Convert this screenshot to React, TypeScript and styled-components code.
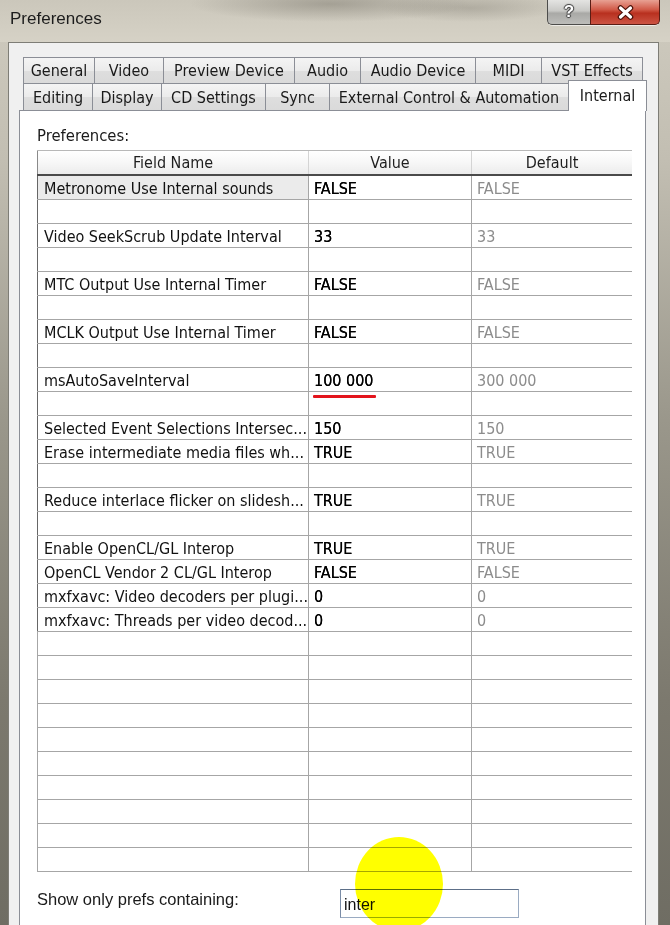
import React from 'react'
import styled, { createGlobalStyle, css } from 'styled-components'

const uiFont = `"DejaVu Sans Condensed", "DejaVu Sans", sans-serif`
const sysFont = `"Liberation Sans", Arial, sans-serif`

const GlobalStyle = createGlobalStyle`
  html, body {
    margin: 0;
    padding: 0;
  }
  body {
    width: 670px;
    height: 925px;
    overflow: hidden;
    background: #8f8c80;
  }
`

const Window = styled.div`
  position: relative;
  width: 670px;
  height: 925px;
  display: flex;
  flex-direction: column;
  overflow: hidden;
  isolation: isolate;
  background: linear-gradient(
    to bottom,
    #cfcbbf 0,
    #c2beb2 160px,
    #9a978b 420px,
    #7c796e 700px,
    #6f6d63 100%
  );
`

const TitleBar = styled.div`
  height: 42px;
  flex: none;
  display: flex;
  align-items: flex-start;
  background:
    radial-gradient(ellipse 140px 18px at 330px 4px, rgba(90, 86, 76, 0.35), transparent),
    radial-gradient(ellipse 90px 14px at 470px 8px, rgba(90, 86, 76, 0.25), transparent),
    linear-gradient(to bottom, #cbc7bb, #d6d2c6);
`

const Title = styled.div`
  margin: 9px 0 0 10px;
  font: 17px/20px ${sysFont};
  color: #1c1c1c;
`

const CaptionButtons = styled.div`
  margin: 0 10px 0 auto;
  display: flex;
  box-shadow: 0 1px 0 rgba(255, 255, 255, 0.6);
  border-radius: 0 0 6px 6px;
`

const CaptionButton = styled.div<{ $kind: 'help' | 'close' }>`
  box-sizing: border-box;
  height: 25px;
  display: flex;
  align-items: center;
  justify-content: center;
  border: 1px solid #4d4d4b;
  border-top: none;
  ${({ $kind }) =>
    $kind === 'help'
      ? css`
          width: 43px;
          border-radius: 0 0 0 5px;
          border-right: none;
          background: linear-gradient(to bottom, #e4e4e2 0, #c9c9c6 45%, #a9a9a6 55%, #bdbdba 100%);
        `
      : css`
          width: 70px;
          border-radius: 0 0 5px 0;
          border-color: #5a1d14;
          background: linear-gradient(to bottom, #e8a193 0, #d15a48 40%, #b8301f 55%, #cc5443 100%);
        `}
`

const HelpGlyph = styled.span`
  font: bold 17px/1 ${sysFont};
  color: #fff;
  text-shadow:
    0 0 1px #333,
    1px 0 1px #444,
    -1px 0 1px #444,
    0 1px 1px #444,
    0 -1px 1px #444;
  margin-bottom: 2px;
`

const Body = styled.div`
  flex: 1;
  display: flex;
  padding: 0 11px 0 8px;
  min-height: 0;
`

const Client = styled.div`
  flex: 1;
  display: flex;
  flex-direction: column;
  background: #f0f0f0;
  border: 1px solid #7e7d76;
  border-bottom: none;
  padding: 14px 12px 0 10px;
  min-width: 0;
`

const TabStrip = styled.div`
  display: flex;
  flex-direction: column;
  padding-left: 4px;
`

const TabRow = styled.div`
  display: flex;
  align-items: flex-start;
`

const Tab = styled.div<{ $w: number; $h: number; $active?: boolean }>`
  box-sizing: border-box;
  width: ${({ $w }) => $w}px;
  height: ${({ $h }) => $h}px;
  margin-right: -1px;
  padding-top: 1px;
  display: flex;
  align-items: center;
  justify-content: center;
  border: 1px solid #8b8e96;
  border-bottom: none;
  font: 16px/18px ${uiFont};
  font-stretch: condensed;
  color: #1a1a1a;
  white-space: nowrap;
  background: linear-gradient(to bottom, #f4f4f4 0, #ebebeb 50%, #dedede 51%, #dadada 100%);
  ${({ $active }) =>
    $active &&
    css`
      position: relative;
      z-index: 1;
      margin-top: -3px;
      margin-bottom: -1px;
      padding-top: 0;
      background: #fff;
    `}
`

const Panel = styled.div`
  flex: 1;
  background: #fff;
  border: 1px solid #8b8e96;
  border-bottom: none;
  padding: 15px 0 0 17px;
`

const Caption = styled.div`
  font: 16.5px/20px ${uiFont};
  font-stretch: condensed;
  color: #1a1a1a;
  margin-bottom: 4px;
`

const Table = styled.div`
  width: 595px;
  display: flex;
  flex-direction: column;
`

const cols = css`
  display: grid;
  grid-template-columns: 271px 163px 161px;
`

const HeaderRow = styled.div`
  ${cols};
  box-sizing: border-box;
  height: 26px;
  border-top: 1px solid #b8b8b8;
  border-bottom: 2px solid #4a4a4a;
  background: linear-gradient(to bottom, #ffffff 0, #f7f7f7 50%, #ececec 100%);
`

const HeaderCell = styled.div<{ $first?: boolean }>`
  border-left: 1px solid ${({ $first }) => ($first ? '#8a8a8a' : '#d4d4d4')};
  text-align: center;
  font: 16px/23px ${uiFont};
  font-stretch: condensed;
  color: #1e1e1e;
`

const Row = styled.div`
  ${cols};
  box-sizing: border-box;
  height: 24px;
  border-bottom: 1px solid #a6a6a6;
`

const Cell = styled.div<{ $tone?: 'name' | 'value' | 'default'; $edge?: 'dark' | 'light'; $focus?: boolean }>`
  box-sizing: border-box;
  padding: 2px 0 0 5px;
  white-space: nowrap;
  font: 16px/21px ${uiFont};
  font-stretch: condensed;
  border-left: 1px solid #a6a6a6;
  color: ${({ $tone }) => ($tone === 'default' ? '#8c8c8c' : '#111')};
  ${({ $tone }) =>
    $tone === 'name' &&
    css`
      padding-left: 6px;
      overflow: hidden;
    `}
  ${({ $tone }) =>
    $tone === 'value' &&
    css`
      color: #000;
      text-shadow: 0 0 0.4px #000;
    `}
  ${({ $edge }) =>
    $edge === 'dark' &&
    css`
      border-left-color: #666;
    `}
  ${({ $focus }) =>
    $focus &&
    css`
      background: #ebebeb;
    `}
`

const Marked = styled.span`
  position: relative;

  &::after {
    content: '';
    position: absolute;
    left: -1px;
    bottom: -8px;
    width: 63px;
    height: 3px;
    border-radius: 1px;
    background: #e3141c;
  }
`

const FilterRow = styled.div`
  display: flex;
  align-items: flex-start;
  margin-top: 17px;
`

const FilterLabel = styled.label`
  width: 303px;
  font: 16.5px/20px ${sysFont};
  color: #1a1a1a;
`

const FilterInput = styled.input`
  box-sizing: border-box;
  width: 179px;
  height: 29px;
  margin: 0;
  padding: 3px 0 0 3px;
  border: 1px solid #9aabc2;
  border-top-color: #5d6f88;
  border-left-color: #7a8ca6;
  background: transparent;
  font: 16px ${sysFont};
  color: #111;
  outline: none;
`

const Spot = styled.div`
  position: absolute;
  left: 355px;
  top: 837px;
  width: 88px;
  height: 94px;
  border-radius: 50%;
  background: #ffff00;
  mix-blend-mode: multiply;
  pointer-events: none;
  z-index: 5;
`

type Pref = { name: string; value: string; def: string; mark?: boolean }

const prefs: (Pref | null)[] = [
  { name: 'Metronome Use Internal sounds', value: 'FALSE', def: 'FALSE' },
  null,
  { name: 'Video SeekScrub Update Interval', value: '33', def: '33' },
  null,
  { name: 'MTC Output Use Internal Timer', value: 'FALSE', def: 'FALSE' },
  null,
  { name: 'MCLK Output Use Internal Timer', value: 'FALSE', def: 'FALSE' },
  null,
  { name: 'msAutoSaveInterval', value: '100 000', def: '300 000', mark: true },
  null,
  { name: 'Selected Event Selections Intersec...', value: '150', def: '150' },
  { name: 'Erase intermediate media files wh...', value: 'TRUE', def: 'TRUE' },
  null,
  { name: 'Reduce interlace flicker on slidesh...', value: 'TRUE', def: 'TRUE' },
  null,
  { name: 'Enable OpenCL/GL Interop', value: 'TRUE', def: 'TRUE' },
  { name: 'OpenCL Vendor 2 CL/GL Interop', value: 'FALSE', def: 'FALSE' },
  { name: 'mxfxavc: Video decoders per plugi...', value: '0', def: '0' },
  { name: 'mxfxavc: Threads per video decod...', value: '0', def: '0' },
]

const EMPTY_ROWS = 10

const topTabs: [string, number][] = [
  ['General', 72],
  ['Video', 70],
  ['Preview Device', 132],
  ['Audio', 67],
  ['Audio Device', 116],
  ['MIDI', 67],
  ['VST Effects', 102],
]

const bottomTabs: [string, number][] = [
  ['Editing', 70],
  ['Display', 70],
  ['CD Settings', 105],
  ['Sync', 65],
  ['External Control & Automation', 240],
]

const CloseIcon = () => (
  <svg width="17" height="15" viewBox="0 0 17 15">
    <path d="M3.5 3 L13.5 12 M13.5 3 L3.5 12" stroke="#4a1008" strokeWidth="5.5" strokeLinecap="round" />
    <path d="M3.5 3 L13.5 12 M13.5 3 L3.5 12" stroke="#fff" strokeWidth="3.2" strokeLinecap="round" />
  </svg>
)

export default function App() {
  return (
    <Window>
      <GlobalStyle />
      <TitleBar>
        <Title>Preferences</Title>
        <CaptionButtons>
          <CaptionButton $kind="help">
            <HelpGlyph>?</HelpGlyph>
          </CaptionButton>
          <CaptionButton $kind="close">
            <CloseIcon />
          </CaptionButton>
        </CaptionButtons>
      </TitleBar>
      <Body>
        <Client>
          <TabStrip>
            <TabRow>
              {topTabs.map(([label, w]) => (
                <Tab key={label} $w={w} $h={26}>
                  {label}
                </Tab>
              ))}
            </TabRow>
            <TabRow>
              {bottomTabs.map(([label, w]) => (
                <Tab key={label} $w={w} $h={27}>
                  {label}
                </Tab>
              ))}
              <Tab $w={79} $h={31} $active>
                Internal
              </Tab>
            </TabRow>
          </TabStrip>
          <Panel>
            <Caption>Preferences:</Caption>
            <Table>
              <HeaderRow>
                <HeaderCell $first>Field Name</HeaderCell>
                <HeaderCell>Value</HeaderCell>
                <HeaderCell>Default</HeaderCell>
              </HeaderRow>
              {prefs.map((p, i) => (
                <Row key={i}>
                  <Cell $tone="name" $edge="dark" $focus={i === 0}>
                    {p?.name}
                  </Cell>
                  <Cell $tone="value">{p && (p.mark ? <Marked>{p.value}</Marked> : p.value)}</Cell>
                  <Cell $tone="default">{p?.def}</Cell>
                </Row>
              ))}
              {Array.from({ length: EMPTY_ROWS }, (_, i) => (
                <Row key={`e${i}`}>
                  <Cell $edge="light" />
                  <Cell />
                  <Cell />
                </Row>
              ))}
            </Table>
            <FilterRow>
              <FilterLabel>Show only prefs containing:</FilterLabel>
              <FilterInput value="inter" readOnly />
            </FilterRow>
          </Panel>
        </Client>
      </Body>
      <Spot />
    </Window>
  )
}
